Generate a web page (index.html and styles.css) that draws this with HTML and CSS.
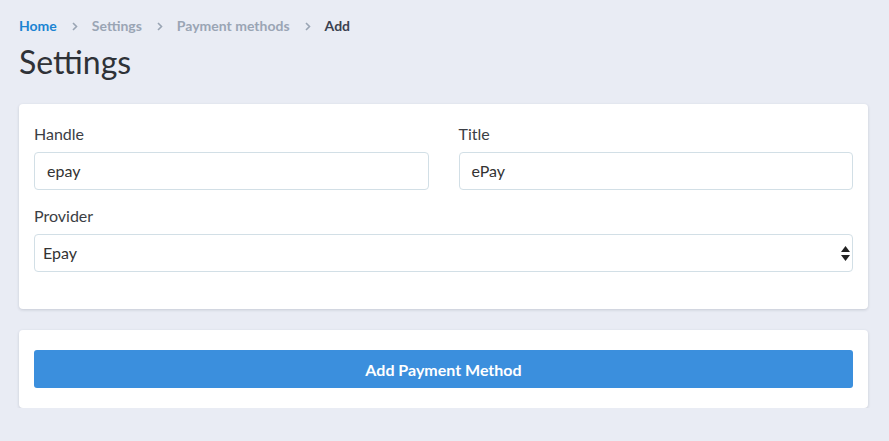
FILE: index.html
```
<!DOCTYPE html>
<html>
<head>
<meta charset="utf-8">
<link rel="stylesheet" href="styles.css">
</head>
<body>
<div class="page">
  <nav class="crumbs">
    <a class="crumb home">Home</a>
    <span class="sep"><svg width="6" height="9" viewBox="0 0 6 9"><path d="M1 1l3.5 3.5L1 8" fill="none" stroke="#9aa5b4" stroke-width="1.6"/></svg></span>
    <a class="crumb">Settings</a>
    <span class="sep"><svg width="6" height="9" viewBox="0 0 6 9"><path d="M1 1l3.5 3.5L1 8" fill="none" stroke="#9aa5b4" stroke-width="1.6"/></svg></span>
    <a class="crumb">Payment methods</a>
    <span class="sep"><svg width="6" height="9" viewBox="0 0 6 9"><path d="M1 1l3.5 3.5L1 8" fill="none" stroke="#9aa5b4" stroke-width="1.6"/></svg></span>
    <span class="crumb current">Add</span>
  </nav>
  <h1 class="title">Settings</h1>

  <div class="card form-card">
    <div class="row">
      <div class="group">
        <label class="label">Handle</label>
        <div class="input">epay</div>
      </div>
      <div class="group">
        <label class="label">Title</label>
        <div class="input">ePay</div>
      </div>
    </div>
    <div class="group">
      <label class="label">Provider</label>
      <div class="input select">Epay
        <svg class="arrows" width="9" height="15" viewBox="0 0 9 15"><path d="M4.5 0L9 6H0z" fill="#222"/><path d="M4.5 15L9 9H0z" fill="#222"/></svg>
      </div>
    </div>
  </div>

  <div class="card action-card">
    <button class="btn">Add Payment Method</button>
  </div>
</div>
</body>
</html>
```
FILE: styles.css
```
html, body {
  margin: 0;
  padding: 0;
  background: #e9ecf4;
}
body {
  font-family: Lato, "Noto Sans", sans-serif;
  color: #333;
}
.page {
  padding: 16px 21px 0 19px;
}
.crumbs {
  display: flex;
  align-items: center;
  font-size: 14px;
  font-weight: 700;
  line-height: 20px;
  height: 20px;
}
.crumb {
  color: #9aa5b4;
  text-decoration: none;
}
.crumb.home {
  color: #1b84d2;
}
.crumb.current {
  color: #3a4150;
}
.sep {
  display: flex;
  align-items: center;
  padding: 0 14px 0 15px;
}
.title {
  margin: 6px 0 22px 0;
  font-size: 32px;
  font-weight: 400;
  line-height: 40px;
  color: #2f3237;
}
.card {
  background: #fff;
  border-radius: 4px;
  box-shadow: 0 1px 3px rgba(40, 50, 70, 0.18);
}
.form-card {
  padding: 20px 15px 21px 15px;
  margin-bottom: 21px;
}
.row {
  display: grid;
  grid-template-columns: 1fr 1fr;
  column-gap: 30px;
}
.group {
  margin-bottom: 16px;
}
.label {
  display: block;
  font-size: 16px;
  line-height: 20px;
  margin-bottom: 8px;
  color: #3b3e44;
}
.input {
  box-sizing: border-box;
  height: 38px;
  border: 1px solid #d2dfe6;
  border-radius: 4px;
  padding: 0 12px;
  font-size: 16px;
  line-height: 36px;
  color: #333;
}
.select {
  position: relative;
  padding-left: 8px;
}
.arrows {
  position: absolute;
  right: 2px;
  top: 11px;
}
.action-card {
  padding: 20px 15px;
}
.btn {
  display: block;
  width: 100%;
  height: 38px;
  border: 0;
  border-radius: 3px;
  background: #3b8fdd;
  color: #fff;
  font-family: Lato, "Noto Sans", sans-serif;
  font-size: 16px;
  font-weight: 700;
}
```
